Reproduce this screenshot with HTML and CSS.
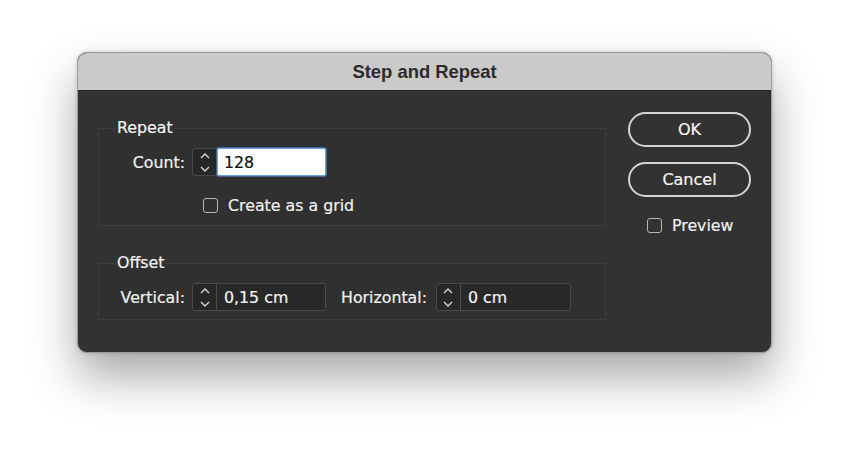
FILE: index.html
```html
<!DOCTYPE html>
<html>
<head>
<meta charset="utf-8">
<link rel="stylesheet" href="styles.css">
</head>
<body>
<div class="dialog">
  <div class="titlebar">Step and Repeat</div>
  <div class="content">
    <div class="left">
      <fieldset class="group group-repeat">
        <legend>Repeat</legend>
        <div class="row">
          <span class="lbl">Count:</span>
          <span class="stepper solo">
            <svg width="10" height="26" viewBox="0 0 10 26"><polyline points="1,9 5,5 9,9"/><polyline points="1,18 5,22 9,18"/></svg>
          </span>
          <span class="input focus">128</span>
        </div>
        <div class="row check-row">
          <span class="box"></span>
          <span class="check-text">Create as a grid</span>
        </div>
      </fieldset>
      <fieldset class="group group-offset">
        <legend>Offset</legend>
        <div class="row">
          <span class="lbl">Vertical:</span>
          <span class="spin">
            <span class="stepper">
              <svg width="10" height="26" viewBox="0 0 10 26"><polyline points="1,9 5,5 9,9"/><polyline points="1,18 5,22 9,18"/></svg>
            </span>
            <span class="val">0,15 cm</span>
          </span>
          <span class="lbl2">Horizontal:</span>
          <span class="spin spin2">
            <span class="stepper">
              <svg width="10" height="26" viewBox="0 0 10 26"><polyline points="1,9 5,5 9,9"/><polyline points="1,18 5,22 9,18"/></svg>
            </span>
            <span class="val">0 cm</span>
          </span>
        </div>
      </fieldset>
    </div>
    <div class="right">
      <div class="btn">OK</div>
      <div class="btn btn2">Cancel</div>
      <div class="preview">
        <span class="box"></span>
        <span class="check-text">Preview</span>
      </div>
    </div>
  </div>
</div>
</body>
</html>
```
FILE: styles.css
```css
html, body {
  margin: 0;
  padding: 0;
  background: #ffffff;
}
body {
  width: 850px;
  height: 455px;
  overflow: hidden;
  padding-top: 52px;
  box-sizing: border-box;
  font-family: "DejaVu Sans", "Liberation Sans", sans-serif;
  font-size: 15.8px;
}
.dialog {
  margin-left: 77px;
  width: 695px;
  height: 301px;
  border-radius: 10px;
  overflow: hidden;
  background: #323232;
  box-sizing: border-box;
  border: 1px solid #9c9c9c;
  box-shadow: 0 24px 46px rgba(0, 0, 0, 0.34), 0 0 4px rgba(0, 0, 0, 0.18);
}
.titlebar {
  height: 37px;
  line-height: 38px;
  background: #cacaca;
  border-bottom: 1px solid #262626;
  text-align: center;
  font-family: "Liberation Sans", Arial, sans-serif;
  font-weight: bold;
  font-size: 18.4px;
  color: #2b2b2b;
}
.content {
  display: flex;
  align-items: flex-start;
  -webkit-text-stroke: 0.2px currentColor;
}
.left {
  padding-top: 27px;
  padding-left: 20px;
  width: 508px;
}
.group {
  margin: 0;
  padding: 10px 0 11px 0;
  border: 1px solid #3d3d3d;
  background: #303030;
  min-width: 0;
}
.group legend {
  margin-left: 17px;
  padding: 0 1px;
  line-height: 20px;
  color: #f4f4f4;
}
.group-offset {
  margin-top: 27px;
  padding-bottom: 8px;
}
.row {
  display: flex;
  align-items: center;
  height: 28px;
  color: #f0f0f0;
}
.lbl {
  width: 86px;
  text-align: right;
  margin-right: 7px;
}
.stepper {
  width: 25px;
  height: 28px;
  box-sizing: border-box;
  display: flex;
  align-items: center;
  justify-content: center;
  background: #272727;
}
.stepper svg polyline {
  fill: none;
  stroke: #d4d4d4;
  stroke-width: 1.4;
}
.stepper.solo {
  border: 1px solid #474747;
  border-right: none;
  border-radius: 3px 0 0 3px;
}
.input {
  width: 109px;
  height: 28px;
  box-sizing: border-box;
  display: flex;
  align-items: center;
  padding-left: 6px;
  background: #ffffff;
  color: #111111;
  border: 1px solid #6aa6e6;
  border-radius: 2px;
  box-shadow: 0 0 0 1px rgba(90, 150, 220, 0.55);
}
.check-row {
  margin-top: 20px;
  height: 18px;
  padding-left: 104px;
}
.box {
  width: 15px;
  height: 15px;
  box-sizing: border-box;
  border: 1px solid #b5b5b5;
  border-radius: 3px;
  margin-right: 10px;
}
.spin {
  display: flex;
  width: 134px;
  height: 28px;
  box-sizing: border-box;
  border: 1px solid #4b4b4b;
  border-radius: 3px;
  background: #282828;
  overflow: hidden;
}
.spin .stepper {
  width: 24px;
  height: 26px;
  border-right: 1px solid #4b4b4b;
}
.spin .val {
  display: flex;
  align-items: center;
  padding-left: 7px;
  color: #f4f4f4;
}
.spin2 {
  width: 135px;
}
.lbl2 {
  margin-left: 15px;
  margin-right: 9px;
}
.right {
  margin-left: 22px;
  padding-top: 21px;
  width: 123px;
}
.btn {
  height: 35px;
  box-sizing: border-box;
  border: 2px solid #d4d4d4;
  border-radius: 18px;
  display: flex;
  align-items: center;
  justify-content: center;
  color: #f6f6f6;
  font-size: 16px;
}
.btn2 {
  margin-top: 15px;
}
.preview {
  margin-top: 19px;
  height: 19px;
  display: flex;
  align-items: center;
  padding-left: 19px;
  color: #f0f0f0;
}
```
